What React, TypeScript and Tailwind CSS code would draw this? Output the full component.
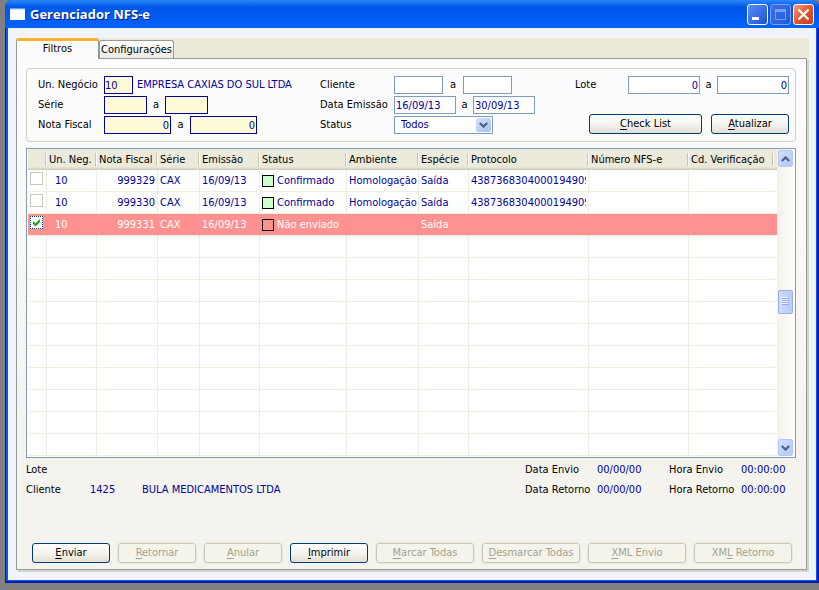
import { useState } from 'react';
import type { ReactNode } from 'react';
import clsx from 'clsx';

interface Invoice {
  unit: string;
  number: string;
  serie: string;
  issued: string;
  status: string;
  environment: string;
  kind: string;
  protocol: string;
  pending?: boolean;
}

const INVOICES: Invoice[] = [
  { unit: '10', number: '999329', serie: 'CAX', issued: '16/09/13', status: 'Confirmado', environment: 'Homologação', kind: 'Saída', protocol: '43873683040001949099' },
  { unit: '10', number: '999330', serie: 'CAX', issued: '16/09/13', status: 'Confirmado', environment: 'Homologação', kind: 'Saída', protocol: '43873683040001949099' },
  { unit: '10', number: '999331', serie: 'CAX', issued: '16/09/13', status: 'Não enviado', environment: '', kind: 'Saída', protocol: '', pending: true },
];

const EMPTY_ROWS = 10;

const COLUMNS = [
  { title: '', width: 'w-[19px]' },
  { title: 'Un. Neg.', width: 'w-[50px]' },
  { title: 'Nota Fiscal', width: 'w-[61px]' },
  { title: 'Série', width: 'w-[42px]' },
  { title: 'Emissão', width: 'w-[60px]' },
  { title: 'Status', width: 'w-[87px]' },
  { title: 'Ambiente', width: 'w-[72px]' },
  { title: 'Espécie', width: 'w-[50px]' },
  { title: 'Protocolo', width: 'w-[120px]' },
  { title: 'Número NFS-e', width: 'w-[100px]' },
  { title: 'Cd. Verificação', width: '' },
];

const ACTIONS = [
  { pre: '', key: 'E', post: 'nviar', width: 'w-[78px]', enabled: true },
  { pre: '', key: 'R', post: 'etornar', width: 'w-[78px]', enabled: false },
  { pre: '', key: 'A', post: 'nular', width: 'w-[78px]', enabled: false },
  { pre: '', key: 'I', post: 'mprimir', width: 'w-[78px]', enabled: true },
  { pre: '', key: 'M', post: 'arcar Todas', width: 'w-[98px]', enabled: false },
  { pre: '', key: 'D', post: 'esmarcar Todas', width: 'w-[98px]', enabled: false },
  { pre: '', key: 'X', post: 'ML Envio', width: 'w-[98px]', enabled: false },
  { pre: 'XM', key: 'L', post: ' Retorno', width: 'w-[98px]', enabled: false },
];

function Chevron({ up = false }: { up?: boolean }) {
  return (
    <svg width="9" height="6" viewBox="0 0 9 6" fill="none" stroke="#4d6185" strokeWidth="2.2" aria-hidden="true">
      <path d={up ? 'M.8 5 4.5 1.4 8.2 5' : 'M.8 1 4.5 4.6 8.2 1'} />
    </svg>
  );
}

function TitleButton({ label, className, children }: { label: string; className: string; children: ReactNode }) {
  return (
    <button
      type="button"
      aria-label={label}
      className={clsx('flex h-[21px] w-[21px] items-center justify-center rounded-[3px] border', className)}
    >
      {children}
    </button>
  );
}

function PushButton({ pre = '', hotkey, post, width, enabled = true }: { pre?: string; hotkey: string; post: string; width: string; enabled?: boolean }) {
  return (
    <button
      type="button"
      disabled={!enabled}
      className={clsx(
        'h-5 shrink-0 rounded-[3px] border whitespace-nowrap',
        width,
        enabled
          ? 'border-[#003c74] bg-linear-to-b from-white via-[#f5f4ef] to-[#e2dfd3] text-black'
          : 'border-[#c9c7ba] bg-[#f5f4ea] text-[#a1a192] outline outline-[#ebe8d9]',
      )}
    >
      {pre}
      <span className="underline underline-offset-2">{hotkey}</span>
      {post}
    </button>
  );
}

interface RangeProps {
  id: string;
  label: string;
  values: [string, string];
  width: string;
  gap: string;
  labelWidth: string;
  yellow?: boolean;
  numeric?: boolean;
}

function RangeField({ id, label, values, width, gap, labelWidth, yellow, numeric }: RangeProps) {
  const box = clsx(
    'h-[18px] border px-px text-[#00009c] outline-none',
    width,
    yellow ? 'border-[#00009c] bg-[#fffbd6]' : 'border-[#7f9db9] bg-white',
    numeric && 'text-right',
  );
  return (
    <div className="flex h-[18px] items-center">
      <label htmlFor={id} className={labelWidth}>{label}</label>
      <input id={id} type="text" defaultValue={values[0]} className={box} />
      <span className={clsx('text-center', gap)}>a</span>
      <input type="text" aria-label={`${label} final`} defaultValue={values[1]} className={box} />
    </div>
  );
}

function Filters() {
  return (
    <section className="flex rounded-[4px] border border-[#d0d0bf] pt-[7px] pr-[6px] pb-[7px] pl-[11px]">
      <div className="flex w-[282px] flex-col gap-0.5">
        <div className="flex h-[18px] items-center">
          <label htmlFor="unit" className="w-[66px]">Un. Negócio</label>
          <input id="unit" type="text" defaultValue="10" className="h-[18px] w-[29px] border border-[#00009c] bg-[#fffbd6] px-0 text-[#00009c] outline-none" />
          <span className="pl-1 whitespace-nowrap text-[#00009c]">EMPRESA CAXIAS DO SUL LTDA</span>
        </div>
        <RangeField id="serie" label="Série" values={['', '']} width="w-[43px]" gap="w-[18px]" labelWidth="w-[66px]" yellow />
        <RangeField id="invoice" label="Nota Fiscal" values={['0', '0']} width="w-[67px]" gap="w-[19px]" labelWidth="w-[66px]" yellow numeric />
      </div>

      <div className="flex flex-col gap-0.5">
        <RangeField id="client" label="Cliente" values={['', '']} width="w-[49px]" gap="w-5" labelWidth="w-[74px]" />
        <RangeField id="issued" label="Data Emissão" values={['16/09/13', '30/09/13']} width="w-[62px]" gap="w-[17px]" labelWidth="w-[74px]" />
        <div className="flex h-[18px] items-center">
          <label htmlFor="status" className="w-[74px]">Status</label>
          <div className="relative">
            <select id="status" defaultValue="Todos" className="block h-[18px] w-[99px] appearance-none border border-[#7f9db9] bg-white pl-1.5 text-[#00009c] outline-none">
              <option>Todos</option>
              <option>Confirmado</option>
              <option>Não enviado</option>
            </select>
            <span className="pointer-events-none absolute top-0.5 right-0.5 flex h-3.5 w-[15px] items-center justify-center rounded-[2px] bg-linear-to-br from-[#d3e0fe] to-[#a8c0f8]">
              <Chevron />
            </span>
          </div>
        </div>
      </div>

      <div className="ml-auto flex flex-col items-end justify-between">
        <RangeField id="lot" label="Lote" values={['0', '0']} width="w-[72px]" gap="w-[17px]" labelWidth="w-[53px]" numeric />
        <div className="flex gap-[9px]">
          <PushButton hotkey="C" post="heck List" width="w-[113px]" />
          <PushButton hotkey="A" post="tualizar" width="w-[78px]" />
        </div>
      </div>
    </section>
  );
}

function RowCheck({ label, checked, onChange }: { label: string; checked: boolean; onChange: () => void }) {
  return (
    <span className="relative block h-[13px] w-[13px]">
      <input
        type="checkbox"
        aria-label={label}
        checked={checked}
        onChange={onChange}
        className="block h-[13px] w-[13px] appearance-none border border-[#c9c7ba] bg-white checked:border-dotted checked:border-[#003c74]"
      />
      {checked && (
        <svg className="pointer-events-none absolute top-[3px] left-[3px]" width="7" height="7" viewBox="0 0 7 7" fill="#21a121" aria-hidden="true">
          <path d="M0 2v3l2 2h1l4-4V0L2.500 4.300z" />
        </svg>
      )}
    </span>
  );
}

function InvoiceTable() {
  const [selected, setSelected] = useState<string[]>(['999331']);

  const toggle = (n: string) =>
    setSelected(s => (s.includes(n) ? s.filter(x => x !== n) : [...s, n]));

  const cell = 'h-[22px] overflow-hidden border-b border-b-[#f0eee1] border-r last:border-r-0 p-0 pl-0.5 whitespace-nowrap';

  return (
    <div className="mt-1.5 flex border border-[#7f9db9] bg-white pb-px pl-px">
      <div className="min-w-0 flex-1">
        <table className="w-full table-fixed border-separate border-spacing-0">
          <colgroup>
            {COLUMNS.map(c => <col key={c.title} className={c.width} />)}
          </colgroup>
          <thead>
            <tr>
              {COLUMNS.map(c => (
                <th key={c.title} className="h-[21px] overflow-hidden bg-linear-to-b from-[#ebeadb] from-85% to-[#cbc7b8] p-0 pr-px text-left font-normal whitespace-nowrap text-black">
                  <div className={clsx('h-[13px] border-r border-[#c7c5b2] pl-0.5 leading-[13px] shadow-[1px_0_0_#fff]', c.width === '' && 'mr-[3px]')}>
                    {c.title}
                  </div>
                </th>
              ))}
            </tr>
          </thead>
          <tbody className="text-[#00009c]">
            {INVOICES.map(inv => {
              const grid = clsx(cell, 'pt-px', inv.pending ? 'border-r-[#ff9290] bg-[#ff9290] text-white' : 'border-r-[#f0eee1]');
              return (
                <tr key={inv.number}>
                  <td className={clsx(grid, 'pb-[5px]')}>
                    <RowCheck
                      label={`Nota ${inv.number}`}
                      checked={selected.includes(inv.number)}
                      onChange={() => toggle(inv.number)}
                    />
                  </td>
                  <td className={clsx(grid, 'pl-2')}>{inv.unit}</td>
                  <td className={clsx(grid, 'pr-0.5 text-right')}>{inv.number}</td>
                  <td className={grid}>{inv.serie}</td>
                  <td className={grid}>{inv.issued}</td>
                  <td className={grid}>
                    <span className="flex items-center gap-[3px]">
                      <i className={clsx('h-3 w-3 shrink-0 border border-black', inv.pending ? 'bg-[#ff9290]' : 'bg-[#ccffcc]')} />
                      {inv.status}
                    </span>
                  </td>
                  <td className={grid}>{inv.environment}</td>
                  <td className={grid}>{inv.kind}</td>
                  <td className={clsx(grid, 'pr-0.5')}>
                    <div className="overflow-hidden">{inv.protocol}</div>
                  </td>
                  <td className={grid} />
                  <td className={grid} />
                </tr>
              );
            })}
            {Array.from({ length: EMPTY_ROWS }, (_, i) => (
              <tr key={i}>
                {COLUMNS.map(c => <td key={c.title} className={clsx(cell, 'border-r-[#f0eee1]')} />)}
              </tr>
            ))}
          </tbody>
        </table>
      </div>

      <div className="flex w-[18px] flex-col items-start bg-linear-to-r from-[#f3f1ec] to-[#fefefb] pt-px pl-px">
        <button type="button" aria-label="Rolar para cima" className="flex h-[17px] w-[15px] items-center justify-center rounded-[2px] border border-[#b4c8f6] bg-linear-to-br from-[#d3e0fe] to-[#b0c6f9]">
          <Chevron up />
        </button>
        <div className="flex-[123]" />
        <div className="flex h-6 w-[15px] flex-col items-center justify-center gap-px rounded-[2px] border border-[#98b0e4] bg-linear-to-r from-[#cddbfd] to-[#b7cbfa]">
          {[0, 1, 2, 3].map(n => <i key={n} className="h-px w-[7px] bg-[#8caaf0] shadow-[-1px_-1px_0_#eef4fe]" />)}
        </div>
        <div className="flex-[126]" />
        <button type="button" aria-label="Rolar para baixo" className="flex h-[17px] w-[15px] items-center justify-center rounded-[2px] border border-[#b4c8f6] bg-linear-to-br from-[#d3e0fe] to-[#b0c6f9]">
          <Chevron />
        </button>
      </div>
    </div>
  );
}

function Details() {
  const value = 'text-[#00009c]';
  return (
    <div className="mt-0.5 flex justify-between leading-5 whitespace-nowrap">
      <dl className="grid grid-cols-[64px_52px_auto] grid-rows-[20px_20px]">
        <dt>Lote</dt>
        <dd className="col-span-2" />
        <dt>Cliente</dt>
        <dd className={value}>1425</dd>
        <dd className={value}>BULA MEDICAMENTOS LTDA</dd>
      </dl>
      <dl className="grid grid-cols-[72px_72px_72px_55px]">
        <dt>Data Envio</dt>
        <dd className={value}>00/00/00</dd>
        <dt>Hora Envio</dt>
        <dd className={value}>00:00:00</dd>
        <dt>Data Retorno</dt>
        <dd className={value}>00/00/00</dd>
        <dt>Hora Retorno</dt>
        <dd className={value}>00:00:00</dd>
      </dl>
    </div>
  );
}

export default function App() {
  return (
    <div className="flex min-h-screen flex-col bg-[#808080] pb-[7px] pl-[5px] font-['DejaVu_Sans_Condensed','DejaVu_Sans',sans-serif] text-[11px] leading-[14px] text-black">
      <div className="flex flex-1 flex-col rounded-t-[7px] bg-[#001ca4]">
        <header className="flex h-7 items-center rounded-t-[7px] bg-linear-to-b from-[#2a86fd] via-[#0056e8] via-25% to-[#0062fb] px-[5px] text-white">
          <svg width="15" height="12" viewBox="0 0 15 12" aria-hidden="true">
            <path fill="#fff" d="M0 0h15v12H0z" />
            <path fill="#5b9bf3" d="M0 0h15v1H0z" />
            <path fill="#d9e8fb" d="M0 1h15v1H0z" />
          </svg>
          <h1 className="pl-[5px] font-['Open_Sans',sans-serif] text-[13px] font-bold [text-shadow:1px_1px_0_#0a1883]">Gerenciador NFS-e</h1>
          <div className="ml-auto flex gap-0.5">
            <TitleButton label="Minimizar" className="border-white bg-linear-to-br from-[#5a8df6] to-[#1e4fd8]">
              <svg width="13" height="13" viewBox="0 0 13 13" aria-hidden="true"><path fill="#fff" d="M1 9h7v3H1z" /></svg>
            </TitleButton>
            <TitleButton label="Maximizar" className="border-[#7c9fee] bg-linear-to-br from-[#3a70e8] to-[#2259d9]">
              <svg width="13" height="13" viewBox="0 0 13 13" fill="none" stroke="#7c9fee" aria-hidden="true">
                <path d="M1.5 1.5h10v10h-10z" />
                <path d="M1 2.5h11" strokeWidth="3" />
              </svg>
            </TitleButton>
            <TitleButton label="Fechar" className="border-white bg-linear-to-br from-[#f09a7e] via-[#e2552c] to-[#c93a10]">
              <svg width="13" height="13" viewBox="0 0 13 13" stroke="#fff" strokeWidth="2.3" aria-hidden="true"><path d="M1.5 1.5l10 10M11.5 1.5l-10 10" /></svg>
            </TitleButton>
          </div>
        </header>

        <main className="mr-0.5 mb-0.5 ml-px flex flex-1 flex-col border-r border-b border-l-2 border-[#0855f5] bg-[#f2f4fb] px-2 py-2.5">
          <div role="tablist" className="mr-[-1px] flex h-5 items-end bg-[#ece9d8]">
            <button type="button" role="tab" aria-selected="true" className="z-10 -mb-px h-[21px] w-[83px] rounded-t-[3px] border-x border-t-3 border-x-[#919b9c] border-t-[#fbb034] bg-[#fcfcfe] pb-0.5">
              Filtros
            </button>
            <button type="button" role="tab" aria-selected="false" className="h-[18px] w-[75px] rounded-t-[3px] border border-b-0 border-[#919b9c] bg-linear-to-b from-white to-[#ecebe4] whitespace-nowrap">
              Configurações
            </button>
          </div>

          <div className="mr-px flex flex-1 flex-col border border-[#919b9c] bg-linear-to-b from-[#fcfcfe] to-[#f4f3ee] to-80% pt-[9px] pr-2.5 pb-1.5 pl-[9px] shadow-[2px_2px_0_#d8d5c4]">
            <Filters />
            <InvoiceTable />
            <Details />
            <div className="mt-auto flex gap-2 pl-1.5">
              {ACTIONS.map(a => (
                <PushButton key={a.pre + a.key + a.post} pre={a.pre} hotkey={a.key} post={a.post} width={a.width} enabled={a.enabled} />
              ))}
            </div>
          </div>
        </main>
      </div>
    </div>
  );
}
